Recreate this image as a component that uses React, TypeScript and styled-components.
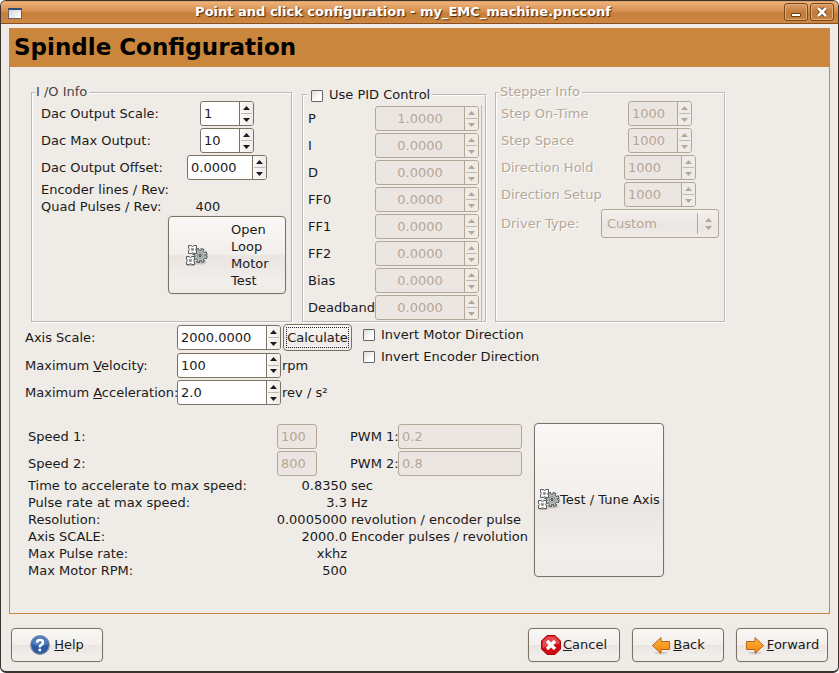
import React from "react";
import styled, { createGlobalStyle, css } from "styled-components";

const color = {
  bg: "#efebe7",
  accent: "#cb863d",
  text: "#1a1a1a",
  dim: "#b5a797",
  edge: "#7c7264",
  edgeDim: "#b5a797",
  fillDim: "#ece6e2",
  line: "#bdb8b5",
};

const GlobalStyle = createGlobalStyle`
  *, *::before, *::after { box-sizing: border-box; }
  body { margin: 0; background: #fff; }
  body, input, button, select {
    font-family: "DejaVu Sans", sans-serif;
    font-size: 13px;
    line-height: 17px;
    color: ${color.text};
  }
`;

const Window = styled.div`
  display: flex;
  flex-direction: column;
  min-height: 100vh;
  background: ${color.bg};
  border: 1px solid #3b3330;
  border-bottom-width: 2px;
  border-radius: 6px;
  overflow: hidden;
`;

const TitleBar = styled.header`
  display: flex;
  align-items: center;
  height: 23px;
  padding: 0 4px 0 7px;
  background: linear-gradient(#c98d58 0, #efb27a 1px, #e3a268 5px, #d38c4a 11px, #c67e39 12px, #cf8843 100%);
  border-bottom: 1px solid #86511f;
`;

const Title = styled.h1`
  flex: 1;
  margin: 0;
  padding-bottom: 2px;
  font-size: 13px;
  line-height: 17px;
  font-weight: bold;
  text-align: center;
  color: #fff;
  text-shadow: 1px 1px 1px #3e2a18;
`;

const WindowIcon = styled.span`
  width: 14px;
  height: 11px;
  margin-top: 2px;
  background: linear-gradient(135deg, #d5d5d5, #fff);
  border: 1px solid #666;
  border-top: 2px solid #2f4a78;
`;

const WindowButtons = styled.div`
  display: flex;
  gap: 2px;
`;

const WindowButton = styled.button`
  display: grid;
  place-items: center;
  width: 24px;
  height: 18px;
  padding: 0;
  background: linear-gradient(#dd9e67, #c07a38 55%, #c98342);
  border: 1px solid #774819;
  border-radius: 3px;
  box-shadow: inset 0 0 0 1px #e0ad7c;
`;

const Page = styled.main`
  flex: 1;
  margin: 4px 8px 0;
  border: 1px solid ${color.accent};
`;

const Banner = styled.h2`
  margin: 0;
  padding: 3px 4px 5px;
  font-size: 23px;
  line-height: 30px;
  font-weight: bold;
  color: #000;
  background: ${color.accent};
`;

const Frames = styled.div`
  display: flex;
  gap: 9px;
  padding: 17px 0 0 21px;
`;

const frameStyles = {
  io: css`
    flex: 0 0 261px;
    margin: 0;
    padding: 0 5px 0 9px;
  `,
  pid: css`
    flex: 0 0 184px;
    margin: 2px 0 0 1px;
    padding: 2px 3px 0 5px;
  `,
  stepper: css`
    flex: 0 0 230px;
    margin: 0;
    padding: 0 5px;
  `,
};

const Frame = styled.fieldset<{ $kind: keyof typeof frameStyles }>`
  min-width: 0;
  border: 1px solid ${color.line};
  box-shadow: 1px 1px 0 #fff, inset 1px 1px 0 #fff;
  ${(p) => frameStyles[p.$kind]}
`;

const Legend = styled.legend<{ $dim?: boolean; $pull: number }>`
  margin-left: -${(p) => p.$pull}px;
  padding: 0 2px 0 1px;
  line-height: 16px;
  background: ${color.bg};
  color: ${(p) => (p.$dim ? color.dim : "#444")};
  text-shadow: ${(p) => (p.$dim ? "1px 1px 0 #fff" : "none")};
`;

const CheckLegend = styled(Legend)`
  padding-left: 4px;
  line-height: 17px;
`;

const FieldGrid = styled.div<{ $label: number }>`
  display: grid;
  grid-template-columns: ${(p) => p.$label}px 1fr;
  align-items: center;
  justify-items: center;
`;

const PidGrid = styled(FieldGrid)`
  justify-items: start;
  border-right: 1px solid ${color.line};
`;

const Label = styled.label<{ $dim?: boolean }>`
  justify-self: start;
  white-space: nowrap;
  color: ${(p) => (p.$dim ? color.dim : "inherit")};
  text-shadow: ${(p) => (p.$dim ? "1px 1px 0 #fff" : "none")};
`;

const MotionLabel = styled(Label)`
  padding-left: 1px;
`;

const Text = styled.span`
  justify-self: start;
  white-space: nowrap;
`;

const Pulses = styled.output`
  justify-self: start;
  width: 80px;
  text-align: center;
`;

const SpinBox = styled.span<{ $width: number; $dim?: boolean }>`
  display: flex;
  width: ${(p) => p.$width}px;
  height: 25px;
  margin: 1px 0;
  overflow: hidden;
  background: ${(p) => (p.$dim ? color.fillDim : "#fff")};
  border: 1px solid ${(p) => (p.$dim ? color.edgeDim : color.edge)};
  border-radius: 3px;
`;

const SpinInput = styled.input<{ $center?: boolean }>`
  flex: 1;
  min-width: 0;
  padding: 0 3px;
  border: 0;
  outline: 0;
  background: transparent;
  text-align: ${(p) => (p.$center ? "center" : "left")};
  &:disabled { color: ${color.dim}; }
`;

const Steps = styled.span<{ $dim?: boolean }>`
  display: flex;
  flex-direction: column;
  width: 14px;
  padding: 0 1px;
  background: ${(p) => (p.$dim ? color.bg : "linear-gradient(90deg, #fbfaf9, #efebe7)")};
  border-left: 1px solid ${(p) => (p.$dim ? color.edgeDim : color.edge)};
`;

const Step = styled.button`
  display: grid;
  place-items: center;
  flex: 1;
  padding: 0;
  border: 0;
  background: none;
  color: #1a1a1a;
  & + & { border-top: 1px solid ${color.line}; }
  &:disabled { color: ${color.dim}; }
`;

const Entry = styled.input<{ $width: number }>`
  width: ${(p) => p.$width}px;
  height: 25px;
  margin: 1px 0;
  padding: 0 3px;
  border: 1px solid ${color.edgeDim};
  border-radius: 3px;
  background: ${color.fillDim};
  color: ${color.dim};
`;

const Button = styled.button`
  display: flex;
  align-items: center;
  justify-content: center;
  padding: 0;
  white-space: nowrap;
  border: 1px solid ${color.edge};
  border-radius: 4px;
  background: linear-gradient(#f9f8f6, #f2efec 49%, #eae5e1 51%, #f1eeeb 85%, #efebe8);
  box-shadow: 0 0 0 1px #e9e4df;
`;

const MotorTestButton = styled(Button)`
  width: 118px;
  height: 78px;
  margin-top: 1px;
  padding-left: 17px;
  justify-content: flex-start;
  gap: 23px;
  text-align: left;
`;

const MotorTestLabel = styled.span`
  width: 44px;
  white-space: normal;
`;

const CalculateButton = styled(Button)`
  width: 69px;
  height: 27px;
  margin-left: 2px;
  box-shadow: none;
  outline: 1px dotted #222;
  outline-offset: -4px;
`;

const TuneButton = styled(Button)`
  width: 130px;
  height: 154px;
  padding-bottom: 2px;
`;

const ActionButton = styled(Button)`
  width: 92px;
  height: 34px;
  gap: 2px;
`;

const HelpButton = styled(ActionButton)`
  gap: 4px;
`;

const ActionText = styled.span`
  padding-bottom: 2px;
`;

const ComboBox = styled.span`
  position: relative;
  width: 118px;
  height: 29px;
  margin: 1px 0;
  color: ${color.dim};
`;

const Select = styled.select`
  width: 100%;
  height: 100%;
  padding: 0 5px;
  appearance: none;
  border: 1px solid ${color.edgeDim};
  border-radius: 3px;
  background: linear-gradient(#f3f0ed, #ebe6e2 60%, #efebe7);
  &:disabled { color: ${color.dim}; opacity: 1; }
`;

const ComboArrows = styled.span`
  position: absolute;
  top: 4px;
  right: 1px;
  display: flex;
  flex-direction: column;
  align-items: center;
  justify-content: center;
  gap: 4px;
  width: 21px;
  height: 21px;
  border-left: 1px solid ${color.edgeDim};
  pointer-events: none;
`;

const Check = styled.input`
  appearance: none;
  width: 12px;
  height: 12px;
  margin: 2px 0 0;
  border: 1px solid #666;
  border-radius: 1px;
  background: linear-gradient(135deg, #dcdcdc, #fff 70%);
  &:checked { background: #444; }
`;

const CheckLabel = styled.label`
  display: flex;
  align-items: center;
  gap: 6px;
  height: 20px;
  white-space: nowrap;
  color: ${color.text};
`;

const LegendCheck = styled(CheckLabel)`
  height: 17px;
`;

const Checks = styled.div`
  display: grid;
  gap: 2px;
`;

const Motion = styled.section`
  display: flex;
  align-items: flex-start;
  gap: 11px;
  padding: 2px 0 0 14px;
`;

const MotionGrid = styled.div`
  display: grid;
  grid-template-columns: 153px 104px 71px;
  grid-template-rows: 27px 28px 27px;
  align-items: center;
`;

const Unit = styled.span`
  padding-left: 1px;
`;

const Results = styled.section`
  display: flex;
  align-items: flex-start;
  gap: 11px;
  padding: 17px 0 34px 18px;
`;

const ResultGrid = styled.div`
  display: grid;
  grid-template-columns: 249px 70px 3px 48px 125px;
  align-items: center;
`;

const Value = styled.output`
  justify-self: end;
  white-space: nowrap;
`;

const ResultUnit = styled.span`
  grid-column: 4 / 6;
  height: 17px;
  padding-left: 1px;
  white-space: nowrap;
`;

const PwmLabel = styled(Label)`
  grid-column: 4;
`;

const Actions = styled.footer`
  display: flex;
  gap: 12px;
  padding: 14px 10px 9px;
`;

const Spacer = styled.span`
  flex: 1;
`;

const Triangle = ({ down }: { down?: boolean }) => (
  <svg width="7" height="4" viewBox="0 0 7 4" aria-hidden="true">
    <path d={down ? "M0 0H7L3.5 4Z" : "M0 4H7L3.5 0Z"} fill="currentColor" />
  </svg>
);

type SpinProps = { id: string; name: string; value: string; width: number; disabled?: boolean; center?: boolean };

const Spin = ({ id, name, value, width, disabled, center }: SpinProps) => (
  <SpinBox $width={width} $dim={disabled}>
    <SpinInput id={id} defaultValue={value} disabled={disabled} $center={center} />
    <Steps $dim={disabled}>
      <Step type="button" disabled={disabled} aria-label={`Increase ${name}`}><Triangle /></Step>
      <Step type="button" disabled={disabled} aria-label={`Decrease ${name}`}><Triangle down /></Step>
    </Steps>
  </SpinBox>
);

type FieldProps = Omit<SpinProps, "name"> & { label: string };

const SpinField = ({ label, ...spin }: FieldProps) => (
  <>
    <Label htmlFor={spin.id} $dim={spin.disabled && !spin.center}>{label}</Label>
    <Spin {...spin} name={label} />
  </>
);

const SmallCog = ({ x, y }: { x: number; y: number }) => (
  <g transform={`translate(${x} ${y})`}>
    <path
      d="M-4 -4H-1.500L0 -3 1.500 -4H4V-1.500L3.200 0 4 1.500V4H1.500L0 3.200 -1.500 4H-4V1.500L-3.200 0 -4 -1.500Z"
      fill="#f9faf9" stroke="#535a59" strokeWidth="1" strokeLinejoin="round"
    />
    <rect x="-1" y="-1" width="2" height="2" fill="#777" stroke="#8d9392" strokeWidth="0.600" />
  </g>
);

const GearsIcon = () => (
  <svg width="22" height="23" viewBox="0 0 22 23" aria-hidden="true">
    <ellipse cx="14" cy="18.500" rx="6.500" ry="2" fill="#c9c5c1" />
    <ellipse cx="5" cy="20.500" rx="4.500" ry="1.500" fill="#b5b1ad" />
    <circle cx="14" cy="11.500" r="5.800" fill="none" stroke="#3f4645" strokeWidth="3.600" strokeDasharray="3 1.555" />
    <circle cx="14" cy="11.500" r="5.300" fill="#b9c0be" stroke="#4a5150" strokeWidth="1" />
    <circle cx="14" cy="11.500" r="5.600" fill="none" stroke="#bfc6c4" strokeWidth="2.200" strokeDasharray="1.600 2.798" strokeDashoffset="-0.700" />
    <circle cx="14" cy="11.500" r="2.900" fill="#dfe3e2" stroke="#7f8785" strokeWidth="1" />
    <circle cx="14" cy="11.500" r="1.200" fill="#aaa" stroke="#2d3332" strokeWidth="1" />
    <SmallCog x={6.5} y={5.5} />
    <SmallCog x={4.5} y={16.5} />
  </svg>
);

const HelpIcon = () => (
  <svg width="20" height="20" viewBox="0 0 20 20" aria-hidden="true">
    <circle cx="10" cy="10" r="9.3" fill="#2c5ba3" stroke="#848ea0" strokeWidth="1.2" />
    <path d="M2 9a8 8 0 0 1 16 0q-8 4-16 0z" fill="#527dbc" />
    <path d="M7 7.700q0-2.700 3-2.700t3 2.400q0 1.500-1.700 2.500T9.800 12.300" fill="none" stroke="#fff" strokeWidth="2.400" />
    <rect x="8.500" y="13.700" width="2.600" height="2.600" fill="#fff" />
  </svg>
);

const CancelIcon = () => (
  <svg width="20" height="20" viewBox="0 0 20 20" aria-hidden="true">
    <path d="M6 .5h8L19.500 6v8L14 19.500H6L.5 14V6z" fill="#cf0a12" stroke="#b00008" />
    <path d="M6.400 1.500h7.200L18.500 6.400V9q-8 0-17 4V6.400z" fill="#e34a4e" />
    <path d="M6 6l8 8M14 6l-8 8" stroke="#fff" strokeWidth="3.400" />
  </svg>
);

const ArrowIcon = ({ right }: { right?: boolean }) => (
  <svg width="20" height="20" viewBox="0 0 20 20" aria-hidden="true">
    <defs>
      <linearGradient id={right ? "arrow-right" : "arrow-left"} x1="0" y1="0" x2="0" y2="1">
        <stop offset="0" stopColor="#ffb54a" />
        <stop offset="1" stopColor="#f58200" />
      </linearGradient>
    </defs>
    <ellipse cx="10" cy="18" rx="7" ry="1.500" fill="#d5d0cb" />
    <path
      d={right ? "M1.500 6.500H10V2.500L18.500 10.500 10 18.500V14.500H1.500Z" : "M18.500 6.500H10V2.500L1.500 10.500 10 18.500V14.500H18.500Z"}
      fill={right ? "url(#arrow-right)" : "url(#arrow-left)"}
      stroke="#b9651a"
      strokeLinejoin="round"
    />
  </svg>
);

const pidTerms = ["P", "I", "D", "FF0", "FF1", "FF2", "Bias", "Deadband"];

const results = [
  ["Time to accelerate to max speed:", "0.8350", "sec"],
  ["Pulse rate at max speed:", "3.3", "Hz"],
  ["Resolution:", "0.0005000", "revolution / encoder pulse"],
  ["Axis SCALE:", "2000.0", "Encoder pulses / revolution"],
  ["Max Pulse rate:", "xkhz", ""],
  ["Max Motor RPM:", "500", ""],
];

const speeds = [
  ["1", "100", "0.2"],
  ["2", "800", "0.8"],
];

export default function App() {
  return (
    <>
      <GlobalStyle />
      <Window>
        <TitleBar>
          <WindowIcon />
          <Title>Point and click configuration - my_EMC_machine.pncconf</Title>
          <WindowButtons>
            <WindowButton type="button" aria-label="Minimize">
              <svg width="10" height="10" viewBox="0 0 10 10"><path d="M.5 6.500h9v3h-9z" fill="#fff" stroke="#6c421b" /></svg>
            </WindowButton>
            <WindowButton type="button" aria-label="Close">
              <svg width="12" height="12" viewBox="0 0 12 12">
                <path d="M2 2l8 8M10 2l-8 8" stroke="#6c421b" strokeWidth="4.500" />
                <path d="M2 2l8 8M10 2l-8 8" stroke="#fff" strokeWidth="2.600" />
              </svg>
            </WindowButton>
          </WindowButtons>
        </TitleBar>

        <Page>
          <Banner>Spindle Configuration</Banner>

          <Frames>
            <Frame $kind="io">
              <Legend $pull={6}>I /O Info</Legend>
              <FieldGrid $label={127}>
                <SpinField id="dac-scale" label="Dac Output Scale:" value="1" width={54} />
                <SpinField id="dac-max" label="Dac Max Output:" value="10" width={54} />
                <SpinField id="dac-offset" label="Dac Output Offset:" value="0.0000" width={80} />
                <Text>Encoder lines / Rev:</Text>
                <span />
                <Text>Quad Pulses / Rev:</Text>
                <Pulses>400</Pulses>
                <span />
                <MotorTestButton type="button">
                  <GearsIcon />
                  <MotorTestLabel>Open Loop Motor Test</MotorTestLabel>
                </MotorTestButton>
              </FieldGrid>
            </Frame>

            <Frame $kind="pid">
              <CheckLegend $pull={1}>
                <LegendCheck><Check type="checkbox" />Use PID Control</LegendCheck>
              </CheckLegend>
              <PidGrid $label={67}>
                {pidTerms.map((term, i) => (
                  <SpinField key={term} id={`pid-${term}`} label={term} value={i === 0 ? "1.0000" : "0.0000"} width={104} disabled center />
                ))}
              </PidGrid>
            </Frame>

            <Frame $kind="stepper">
              <Legend $pull={2} $dim>Stepper Info</Legend>
              <FieldGrid $label={100}>
                <SpinField id="step-on" label="Step On-Time" value="1000" width={64} disabled />
                <SpinField id="step-space" label="Step Space" value="1000" width={64} disabled />
                <SpinField id="dir-hold" label="Direction Hold" value="1000" width={72} disabled />
                <SpinField id="dir-setup" label="Direction Setup" value="1000" width={72} disabled />
                <Label htmlFor="driver" $dim>Driver Type:</Label>
                <ComboBox>
                  <Select id="driver" disabled><option>Custom</option></Select>
                  <ComboArrows><Triangle /><Triangle down /></ComboArrows>
                </ComboBox>
              </FieldGrid>
            </Frame>
          </Frames>

          <Motion>
            <MotionGrid>
              <MotionLabel htmlFor="axis-scale">Axis Scale:</MotionLabel>
              <Spin id="axis-scale" name="Axis Scale" value="2000.0000" width={104} />
              <CalculateButton type="button">Calculate</CalculateButton>
              <MotionLabel htmlFor="max-vel">Maximum <u>V</u>elocity:</MotionLabel>
              <Spin id="max-vel" name="Maximum Velocity" value="100" width={104} />
              <Unit>rpm</Unit>
              <MotionLabel htmlFor="max-acc">Maximum <u>A</u>cceleration:</MotionLabel>
              <Spin id="max-acc" name="Maximum Acceleration" value="2.0" width={104} />
              <Unit>rev / s²</Unit>
            </MotionGrid>
            <Checks>
              <CheckLabel><Check type="checkbox" />Invert Motor Direction</CheckLabel>
              <CheckLabel><Check type="checkbox" />Invert Encoder Direction</CheckLabel>
            </Checks>
          </Motion>

          <Results>
            <ResultGrid>
              {speeds.map(([n, speed, pwm]) => (
                <React.Fragment key={n}>
                  <Label htmlFor={`speed-${n}`}>Speed {n}:</Label>
                  <Entry id={`speed-${n}`} $width={40} defaultValue={speed} disabled />
                  <PwmLabel htmlFor={`pwm-${n}`}>PWM {n}:</PwmLabel>
                  <Entry id={`pwm-${n}`} $width={124} defaultValue={pwm} disabled />
                </React.Fragment>
              ))}
              {results.map(([label, value, unit]) => (
                <React.Fragment key={label}>
                  <Text>{label}</Text>
                  <Value>{value}</Value>
                  <ResultUnit>{unit}</ResultUnit>
                </React.Fragment>
              ))}
            </ResultGrid>
            <TuneButton type="button"><GearsIcon />Test / Tune Axis</TuneButton>
          </Results>
        </Page>

        <Actions>
          <HelpButton type="button"><HelpIcon /><ActionText><u>H</u>elp</ActionText></HelpButton>
          <Spacer />
          <ActionButton type="button"><CancelIcon /><ActionText><u>C</u>ancel</ActionText></ActionButton>
          <ActionButton type="button"><ArrowIcon /><ActionText><u>B</u>ack</ActionText></ActionButton>
          <ActionButton type="button"><ArrowIcon right /><ActionText><u>F</u>orward</ActionText></ActionButton>
        </Actions>
      </Window>
    </>
  );
}
